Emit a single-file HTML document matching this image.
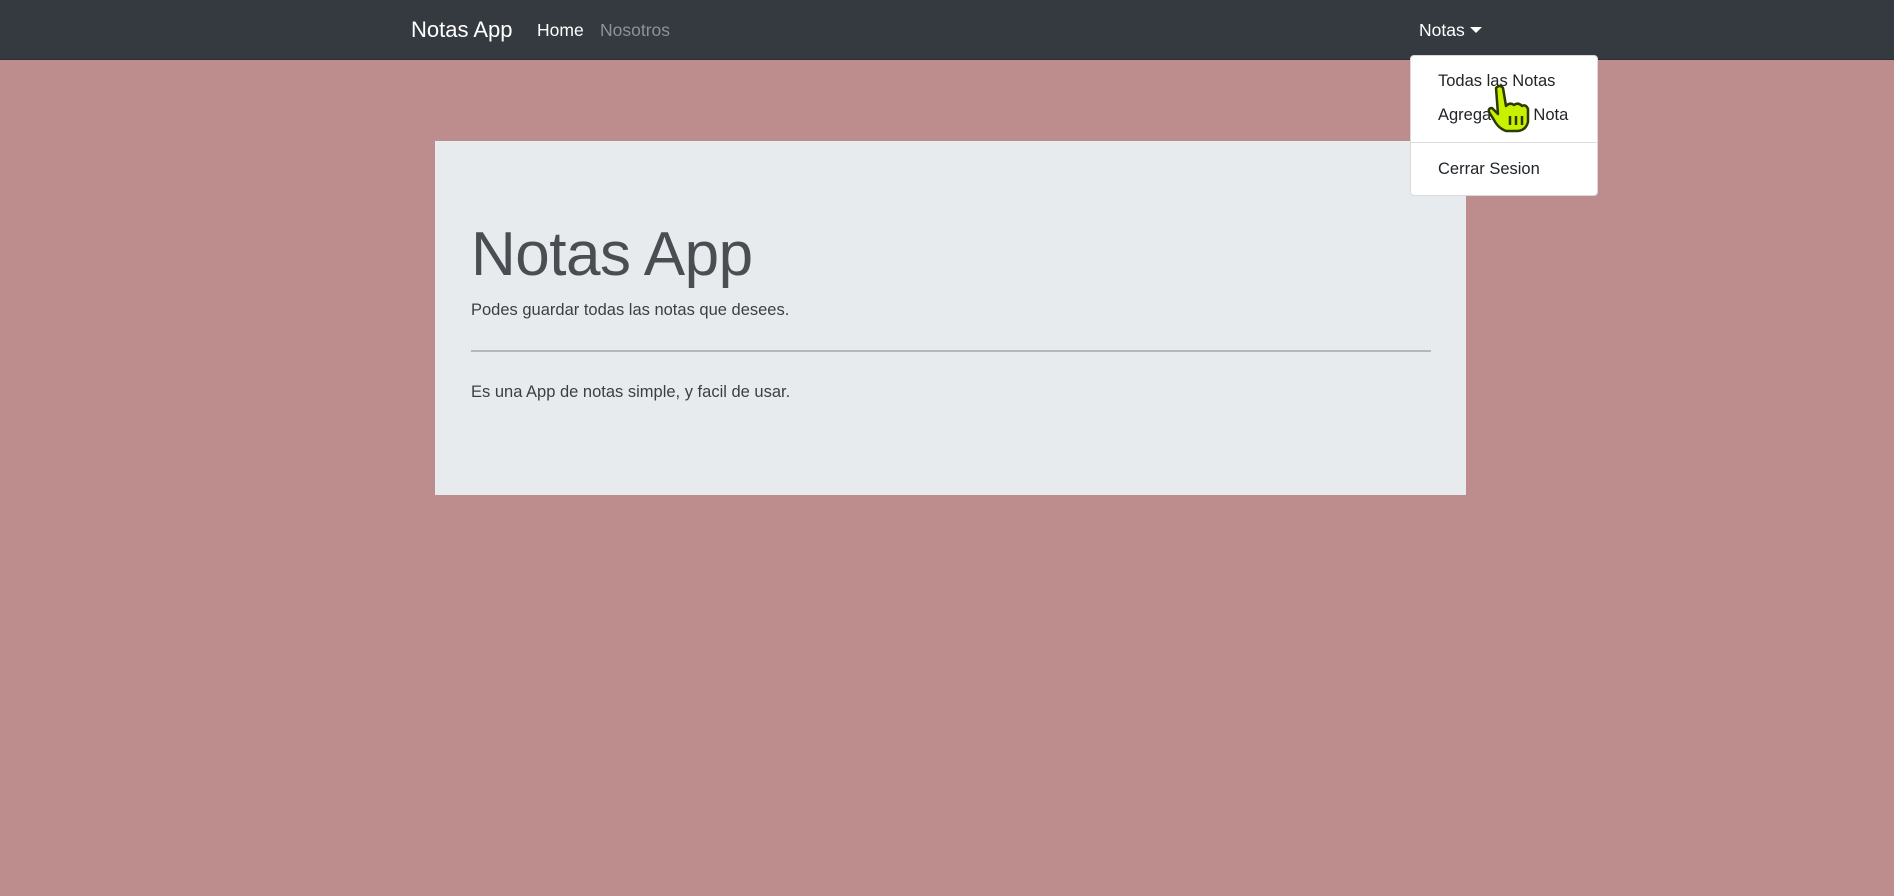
<!DOCTYPE html>
<html><head><meta charset="utf-8"><style>
*{box-sizing:border-box;margin:0;padding:0}
body{width:1894px;height:896px;background:#bc8d8c;font-family:"Liberation Sans",sans-serif;position:relative;overflow:hidden;color:#212529}
.nav{position:absolute;left:0;top:0;width:1894px;height:60px;background:#343a40;border-bottom:1px solid #2a2f33}
.t{position:absolute;white-space:nowrap}
.brand{left:411px;top:17px;font-size:22px;color:#fff}
.home{left:537px;top:20px;font-size:17.5px;color:#fff}
.nos{left:600px;top:20px;font-size:17.5px;color:#8f9296}
.notas{left:1419px;top:20px;font-size:17.5px;color:#fff}
.caret{position:absolute;left:1470px;top:27px;width:0;height:0;border-left:6px solid transparent;border-right:6px solid transparent;border-top:6px solid #fff}
.dd{position:absolute;left:1410px;top:55px;width:188px;height:141px;background:#fff;border:1px solid rgba(0,0,0,.15);border-radius:4px}
.dd .t{left:27px;font-size:16.5px;color:#212529}
.div{position:absolute;left:0;right:0;top:86px;border-top:1px solid #dcdcdc}
.jumbo{position:absolute;left:435px;top:141px;width:1031px;height:354px;background:#e8ebee}
h1{position:absolute;left:36px;top:78px;font-size:62px;font-weight:300;color:#4a4e53;white-space:nowrap;letter-spacing:-0.5px}
.lead{left:36px;top:160px;font-size:16.5px;color:#3b3f44}
hr{position:absolute;left:36px;top:209px;width:960px;border:0;border-top:2px solid #b5b8bb}
.p2{left:36px;top:242px;font-size:16.5px;color:#3b3f44}
</style></head><body>
<div class="nav">
<div class="t brand">Notas App</div>
<div class="t home">Home</div>
<div class="t nos">Nosotros</div>
<div class="t notas">Notas</div>
<div class="caret"></div>
</div>
<div class="jumbo">
<h1>Notas App</h1>
<div class="t lead">Podes guardar todas las notas que desees.</div>
<hr>
<div class="t p2">Es una App de notas simple, y facil de usar.</div>
</div>
<div class="dd">
<div class="t" style="top:16px">Todas las Notas</div>
<div class="t" style="top:50px">Agregar una Nota</div>
<div class="div"></div>
<div class="t" style="top:104px">Cerrar Sesion</div>
</div>
<svg style="position:absolute;left:1486px;top:84px" width="46" height="50" viewBox="0 0 46 50">
<path d="M10 4 Q14 0 17 4 L20 22 Q24 18 28 21 Q32 18 36 22 Q40 20 42 25 L42 38 Q40 46 32 47 L20 47 Q12 44 8 36 L3 28 Q2 24 6 24 L12 30 Z" fill="#c8f000" stroke="#2a3a00" stroke-width="2.5" stroke-linejoin="round"/>
<path d="M24 32 V41 M30 32 V41 M36 32 V41" stroke="#2a3a00" stroke-width="2.5"/>
</svg>
</body></html>
